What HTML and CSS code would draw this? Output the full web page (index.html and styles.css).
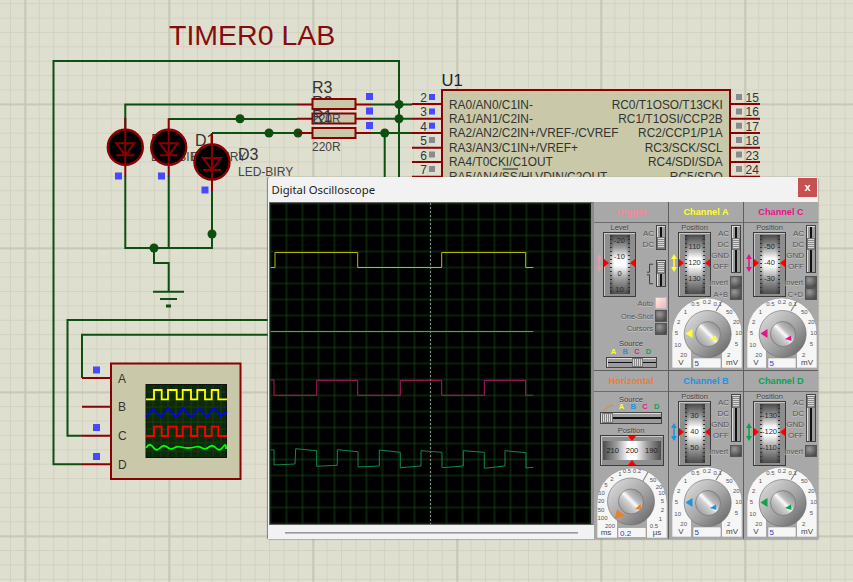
FILE: index.html
```html
<!DOCTYPE html>
<html lang="en">
<head>
  <meta charset="UTF-8" />
  <title>TIMER0 LAB - Digital Oscilloscope</title>
  <link rel="stylesheet" href="styles.css">
</head>
<body>
<div class="desk">

  <!-- schematic -->
  <svg class="schematic" width="853" height="582" viewBox="0 0 853 582">
    <text class="title" x="169" y="45">TIMER0 LAB</text>

    <g class="wires">
      <path d="M268 61H53.5V464.3H82M399 177V61H268"/>
      <path d="M125.3 130V104.4H297M371 104.4H412"/>
      <path d="M168.7 119H297M371 118.7H412"/>
      <path d="M212 133H297M371 133H412"/>
      <path d="M399 104V177M384.7 133V177"/>
      <path d="M125.3 176V248H212V191M168.7 176V248M154 248V263H168.7V291.7"/>
      <path d="M153 291.7H184M160 299H177" />
      <path class="thick" d="M166 306H171"/>
      <path d="M268 320H67.5V435.7H82M268 334.7H82V378"/>
    </g>
    <g class="nodes">
      <circle cx="240" cy="118.7" r="4.5"/>
      <circle cx="269" cy="133" r="4.5"/>
      <circle cx="298" cy="133" r="4.5"/>
      <circle cx="399" cy="104.4" r="4.5"/>
      <circle cx="399" cy="118.7" r="4.5"/>
      <circle cx="384.7" cy="133" r="4.5"/>
      <circle cx="212" cy="234" r="4.5"/>
      <circle cx="154" cy="248" r="4.5"/>
    </g>

    <!-- LEDs -->
    <text class="lbl" x="151" y="145.6">D2</text>
    <text class="lbl-sm" x="151" y="161">LED-BIRY</text>
    <text class="lbl" x="195" y="145.6">D1</text>
    <text class="lbl-sm" x="191" y="161">LED-BIRY</text>
    <text class="lbl" x="238" y="160">D3</text>
    <text class="lbl-sm" x="238" y="175.6">LED-BIRY</text>
    <g class="led" transform="translate(125.3 147.3)">
      <circle r="17.5"/><path class="lead" d="M0 -29.5V29"/><path d="M-9 -4H9L0 8ZM-9 8H9"/>
    </g>
    <g class="led" transform="translate(168.7 147.3)">
      <circle r="17.5"/><path class="lead" d="M0 -29V29"/><path d="M-9 -4H9L0 8ZM-9 8H9"/>
    </g>
    <g class="led" transform="translate(212 162)">
      <circle r="17.5"/><path class="lead" d="M0 -29V29"/><path d="M-9 -4H9L0 8ZM-9 8H9"/>
    </g>
    <rect class="probe" x="115" y="172.5" width="7" height="7"/>
    <rect class="probe" x="158" y="172.5" width="7" height="7"/>
    <rect class="probe" x="201.5" y="186.5" width="7" height="7"/>

    <!-- resistors -->
    <g class="red">
      <path d="M297 104.4H371M297 118.7H371M297 133H371"/>
    </g>
    <text class="lbl" x="312" y="93">R3</text>
    <text class="lbl" x="312" y="107.5">R2</text>
    <g class="part">
      <rect x="312.5" y="99" width="43" height="10"/>
      <rect x="312.5" y="113.5" width="43" height="10"/>
      <rect x="312.5" y="128" width="43" height="10"/>
    </g>
    <text class="lbl-sm" x="312" y="122.7">220R</text>
    <text class="lbl" x="312" y="122">R1</text>
    <text class="lbl-sm" x="312" y="151">220R</text>
    <rect class="probe" x="366" y="93" width="7" height="7"/>
    <rect class="probe" x="366" y="107.5" width="7" height="7"/>
    <rect class="probe" x="366" y="122" width="7" height="7"/>

    <!-- U1 -->
    <text class="lbl-lg" x="441.5" y="86">U1</text>
    <g class="red">
      <path d="M412 104H442M412 118.7H442M412 133H442M412 147.7H442M412 162H442M412 176.7H442"/>
      <path d="M730 104H760M730 118.7H760M730 133H760M730 147.7H760M730 162H760M730 176.7H760"/>
    </g>
    <rect class="part" x="442" y="90" width="288" height="120"/>
    <g class="pin-no">
      <text x="427" y="101.7">2</text><text x="427" y="116">3</text><text x="427" y="130.5">4</text>
      <text x="427" y="145">5</text><text x="427" y="159.5">6</text><text x="427" y="174">7</text>
    </g>
    <g class="pin-no-r">
      <text x="745.5" y="101.7">15</text><text x="745.5" y="116">16</text><text x="745.5" y="130.5">17</text>
      <text x="745.5" y="145">18</text><text x="745.5" y="159.5">23</text><text x="745.5" y="174">24</text>
    </g>
    <rect class="probe" x="429" y="94" width="6" height="6"/>
    <rect class="probe" x="429" y="108.5" width="6" height="6"/>
    <rect class="probe" x="429" y="122.7" width="6" height="6"/>
    <g class="idle">
      <rect x="429" y="137" width="6" height="6"/><rect x="429" y="151.5" width="6" height="6"/><rect x="429" y="166" width="6" height="6"/>
      <rect x="736" y="94" width="6" height="6"/><rect x="736" y="108.5" width="6" height="6"/><rect x="736" y="122.7" width="6" height="6"/>
      <rect x="736" y="137" width="6" height="6"/><rect x="736" y="151.5" width="6" height="6"/><rect x="736" y="166" width="6" height="6"/>
    </g>
    <g class="chip-l">
      <text x="449" y="108.5">RA0/AN0/C1IN-</text>
      <text x="449" y="123">RA1/AN1/C2IN-</text>
      <text x="449" y="137.4">RA2/AN2/C2IN+/VREF-/CVREF</text>
      <text x="449" y="152">RA3/AN3/C1IN+/VREF+</text>
      <text x="449" y="166.2">RA4/T0CKI/C1OUT</text>
      <text x="449" y="180.6">RA5/AN4/SS/HLVDIN/C2OUT</text>
    </g>
    <path class="bar" d="M502.7 169H518"/>
    <g class="chip-r">
      <text x="722.7" y="108.5">RC0/T1OSO/T13CKI</text>
      <text x="722.7" y="123">RC1/T1OSI/CCP2B</text>
      <text x="722.7" y="137.4">RC2/CCP1/P1A</text>
      <text x="722.7" y="152">RC3/SCK/SCL</text>
      <text x="722.7" y="166.2">RC4/SDI/SDA</text>
      <text x="722.7" y="180.6">RC5/SDO</text>
    </g>

    <!-- scope symbol -->
    <g class="red">
      <path d="M82 378H111M82 406.7H111M82 435.7H111M82 464.3H111"/>
    </g>
    <rect class="part" x="111" y="363.5" width="129.5" height="115.5"/>
    <text class="pin-tag" x="118" y="382.5">A</text>
    <text class="pin-tag" x="118" y="411">B</text>
    <text class="pin-tag" x="118" y="440">C</text>
    <text class="pin-tag" x="118" y="468.5">D</text>
    <rect class="probe" x="93" y="366.5" width="7" height="7"/>
    <rect class="probe" x="93" y="424" width="7" height="7"/>
    <rect class="probe" x="93" y="453" width="7" height="7"/>
    <rect class="mini" x="146" y="384.5" width="80.5" height="73"/>
    <path class="mini-grid" d="M153 385V457M161 385V457M168 385V457M176 385V457M183 385V457M191 385V457M198 385V457M206 385V457M213 385V457M221 385V457M146 392H226M146 400H226M146 407H226M146 414H226M146 422H226M146 429H226M146 436H226M146 443H226M146 451H226"/>
    <path class="t-y" d="M146 399.3H154V390H161.7V399.3H168V390H176.7V399.3H182.7V390H191V399.3H197.3V390H205V399.3H211.7V390H218.3V399.3H227"/>
    <path class="t-b" d="M146 416.5L153 409L161 417L168 408L176 417L183 408L191 417L199 408L207 417L214 408L221 416L227 411"/>
    <path class="t-r" d="M146 436H154V426.7H161.7V436H168V426.7H176.7V436H182.7V426.7H191V436H197.3V426.7H205V436H211.7V426.7H218.3V436H227"/>
    <path class="t-g" d="M146 448q3.5 -6 7 -1t7 1t7 -1t7 1t7 -1t7 1t7 -1t7 1t7 -1t7 1t7 -1t3 2"/>

    <!-- shared paint for the dials -->
    <defs>
      <linearGradient id="knob-out" x1="0" y1="0" x2="1" y2="1">
        <stop offset="0" stop-color="#e4e4e4"/><stop offset=".55" stop-color="#a2a2a2"/><stop offset="1" stop-color="#5c5c5c"/>
      </linearGradient>
      <linearGradient id="knob-in" x1="0" y1="1" x2="1" y2="0">
        <stop offset="0" stop-color="#8a8a8a"/><stop offset=".42" stop-color="#cfcfcf"/><stop offset=".52" stop-color="#fbfbfb"/><stop offset=".62" stop-color="#bcbcbc"/><stop offset="1" stop-color="#7a7a7a"/>
      </linearGradient>
      <symbol id="dial-volts" viewBox="0 0 70 70">
        <path class="scale" d="M0 70V35A35 35 0 0 1 70 35V70Z"/>
        <rect class="well" x="19" y="50" width="31" height="20"/>
        <path class="slash" d="M44 13L50 3"/>
        <g class="ticks">
          <text x="11.7" y="56.7">20</text><text x="5.7" y="46.7">10</text><text x="4.3" y="35">5</text>
          <text x="6.7" y="24">2</text><text x="13.3" y="14">1</text><text x="23.3" y="6">0.5</text>
          <text x="35" y="3.8">0.2</text><text x="45.7" y="6">0.1</text><text x="57.3" y="14">50</text>
          <text x="64.3" y="24">20</text><text x="66.7" y="35">10</text><text x="64.3" y="45.7">5</text><text x="56.7" y="56.7">2</text>
        </g>
        <circle cx="35.7" cy="36" r="23.5" fill="url(#knob-out)" class="knob"/>
        <circle cx="36" cy="36" r="12.5" fill="url(#knob-in)" class="knob"/>
        <path fill="currentColor" d="M13.5 35.5L20.5 31V40Z"/>
        <path fill="currentColor" d="M38 41L44 37.5L44.5 43Z"/>
        <rect class="entry" x="21" y="60" width="28" height="10"/>
        <text class="entry-val" x="22.5" y="68">5</text>
        <text class="unit" x="9" y="67">V</text>
        <text class="unit" x="60" y="67">mV</text>
      </symbol>
      <symbol id="dial-time" viewBox="0 0 70 70">
        <path class="scale" d="M0 70V35A35 35 0 0 1 70 35V70Z"/>
        <rect class="well" x="20" y="50" width="30" height="20"/>
        <path class="slash" d="M46 13L51 4"/>
        <g class="ticks">
          <text x="13" y="57.5">200</text><text x="5.5" y="50">100</text><text x="4" y="42">50</text>
          <text x="4" y="33">20</text><text x="4.5" y="25">10</text><text x="9" y="17">5</text>
          <text x="15" y="11">2</text><text x="23" y="5.5">1</text><text x="30" y="3">0.5</text>
          <text x="40" y="3">0.2</text><text x="56" y="12">50</text><text x="62" y="19">20</text>
          <text x="64.5" y="25">10</text><text x="65.5" y="33">5</text><text x="65.5" y="42">2</text>
          <text x="63.5" y="51">1</text><text x="57" y="57.5">0.5</text>
        </g>
        <circle cx="34" cy="33.5" r="23.5" fill="url(#knob-out)" class="knob"/>
        <circle cx="34" cy="33.5" r="12.5" fill="url(#knob-in)" class="knob"/>
        <path fill="currentColor" d="M17.5 51L20 41.5L28 47.5Z"/>
        <path fill="currentColor" d="M38 41L43.5 36L44.5 42Z"/>
        <rect class="entry" x="21" y="59.5" width="28" height="10"/>
        <text class="entry-val" x="23" y="67.5">0.2</text>
        <text class="unit" x="9" y="67">ms</text>
        <text class="unit" x="60" y="67">µs</text>
      </symbol>
    </defs>
  </svg>

  <!-- oscilloscope window -->
  <div class="scope">
    <div class="scope-title">
      <span>Digital Oscilloscope</span>
      <button class="close-btn">x</button>
    </div>
    <div class="scope-main">
      <div class="scope-left">
        <div class="screen">
          <svg width="321" height="321" viewBox="270 203 321 321">
            <defs>
              <pattern id="div" x="278.5" y="211.5" width="16" height="16" patternUnits="userSpaceOnUse">
                <path d="M8 0V16M0 8H16" stroke="#143f19" stroke-width="1" fill="none"/>
              </pattern>
            </defs>
            <rect x="270" y="203" width="321" height="321" fill="#000"/>
            <rect x="270" y="203" width="321" height="321" fill="url(#div)"/>
            <path class="centre" d="M430.5 203V524"/>
            <path class="tr-a" d="M270.7 267.5H275V252.5H357.7V267.5H441.7V252.5H525.7V267.5H533.3"/>
            <path class="tr-b" d="M270.7 331.5H533.3"/>
            <path class="tr-c" d="M270.7 380H274V395.3H316.7V380.3H357.7V395.3H400.3V380.3H441.7V395.3H484.3V380.3H525.7V395.3H533.3"/>
            <path class="tr-d" d="M270.7 449.7L274 450V465L295 464L295.7 448.7L316.7 450.7V466.3L337.3 465.3V449.7L358 451.7V467L379.3 466V450L400.3 452.3V467.7L421 466V450.7L442 452.3V467.7L463.3 466V450.7L484.3 452.3V468.3L505 466V450.7L526 452.7V468L533.3 467.3"/>
          </svg>
        </div>
        <div class="hbar"><i></i></div>
      </div>

      <div class="panels">
        <!-- Trigger -->
        <section class="panel">
          <h3 class="panel-head c-trig">Trigger</h3>
          <div class="panel-top">
            <div class="shift c-trig-a"><svg viewBox="0 0 8 18" preserveAspectRatio="none"><path d="M4 0L8 5H5V13H8L4 18L0 13H3V5H0Z"/></svg></div>
            <div class="drum-col">
              <div class="cap">Level</div>
              <div class="drum-frame">
                <div class="drum four"><span>-20</span><span>-10</span><span>0</span><span>10</span></div>
                <b class="mark mark-l"></b><b class="mark mark-r"></b>
              </div>
            </div>
            <div class="side">
              <div class="side-row">
                <div class="modes"><span>AC</span><span>DC</span></div>
                <div class="vslider short"><i class="thumb low"></i></div>
              </div>
              <div class="side-row edge-row">
                <svg class="edge" width="8" height="24" viewBox="0 0 9 24"><path d="M1 10H4V1H8M1 13H4V23H8"/></svg>
                <div class="vslider tall"><i class="thumb"></i></div>
              </div>
            </div>
          </div>
          <div class="btn-rows">
            <div class="btn-row"><span>Auto</span><i class="btn on"></i></div>
            <div class="btn-row"><span>One-Shot</span><i class="btn"></i></div>
            <div class="btn-row"><span>Cursors</span><i class="btn"></i></div>
          </div>
          <div class="source">
            <div class="cap">Source</div>
            <div class="letters"><span class="l-a">A</span><span class="l-b">B</span><span class="l-c">C</span><span class="l-d">D</span></div>
            <div class="hslider"><i class="thumb-h mid"></i></div>
          </div>
        </section>

        <!-- Channel A -->
        <section class="panel">
          <h3 class="panel-head c-a">Channel A</h3>
          <div class="panel-top">
            <div class="shift c-a"><svg viewBox="0 0 8 18" preserveAspectRatio="none"><path d="M4 0L8 5H5V13H8L4 18L0 13H3V5H0Z"/></svg></div>
            <div class="drum-col">
              <div class="cap">Position</div>
              <div class="drum-frame">
                <div class="drum"><span>110</span><span>120</span><span>130</span></div>
                <b class="mark mark-l"></b><b class="mark mark-r"></b>
              </div>
            </div>
            <div class="side">
              <div class="side-row">
                <div class="modes"><span>AC</span><span>DC</span><span>GND</span><span>OFF</span></div>
                <div class="vslider"><i class="thumb dc"></i></div>
              </div>
              <div class="btn-row"><span>Invert</span><i class="btn"></i></div>
              <div class="btn-row"><span>A+B</span><i class="btn"></i></div>
            </div>
          </div>
          <svg class="dial c-a"><use href="#dial-volts"/></svg>
        </section>

        <!-- Channel C -->
        <section class="panel">
          <h3 class="panel-head c-c">Channel C</h3>
          <div class="panel-top">
            <div class="shift c-c"><svg viewBox="0 0 8 18" preserveAspectRatio="none"><path d="M4 0L8 5H5V13H8L4 18L0 13H3V5H0Z"/></svg></div>
            <div class="drum-col">
              <div class="cap">Position</div>
              <div class="drum-frame">
                <div class="drum"><span>-50</span><span>-40</span><span>-30</span></div>
                <b class="mark mark-l"></b><b class="mark mark-r"></b>
              </div>
            </div>
            <div class="side">
              <div class="side-row">
                <div class="modes"><span>AC</span><span>DC</span><span>GND</span><span>OFF</span></div>
                <div class="vslider"><i class="thumb dc"></i></div>
              </div>
              <div class="btn-row"><span>Invert</span><i class="btn"></i></div>
              <div class="btn-row"><span>C+D</span><i class="btn"></i></div>
            </div>
          </div>
          <svg class="dial c-c"><use href="#dial-volts"/></svg>
        </section>

        <!-- Horizontal -->
        <section class="panel">
          <h3 class="panel-head c-h">Horizontal</h3>
          <div class="source h-source">
            <div class="cap">Source</div>
            <div class="letters">
              <svg class="ramp" width="10" height="7" viewBox="0 0 10 7"><path d="M0 7L8 1H10"/></svg>
              <span class="l-a">A</span><span class="l-b">B</span><span class="l-c">C</span><span class="l-d">D</span>
            </div>
            <div class="hslider wide"><i class="thumb-h"></i></div>
          </div>
          <div class="cap">Position</div>
          <div class="drum-frame flat">
            <div class="drum-h"><span>210</span><span>200</span><span>190</span></div>
            <b class="mark mark-t"></b><b class="mark mark-b"></b>
          </div>
          <svg class="dial c-h time"><use href="#dial-time"/></svg>
        </section>

        <!-- Channel B -->
        <section class="panel">
          <h3 class="panel-head c-b">Channel B</h3>
          <div class="panel-top">
            <div class="shift c-b"><svg viewBox="0 0 8 18" preserveAspectRatio="none"><path d="M4 0L8 5H5V13H8L4 18L0 13H3V5H0Z"/></svg></div>
            <div class="drum-col">
              <div class="cap">Position</div>
              <div class="drum-frame">
                <div class="drum"><span>30</span><span>40</span><span>50</span></div>
                <b class="mark mark-l"></b><b class="mark mark-r"></b>
              </div>
            </div>
            <div class="side">
              <div class="side-row">
                <div class="modes"><span>AC</span><span>DC</span><span>GND</span><span>OFF</span></div>
                <div class="vslider"><i class="thumb"></i></div>
              </div>
              <div class="btn-row"><span>Invert</span><i class="btn"></i></div>
            </div>
          </div>
          <svg class="dial c-b"><use href="#dial-volts"/></svg>
        </section>

        <!-- Channel D -->
        <section class="panel">
          <h3 class="panel-head c-d">Channel D</h3>
          <div class="panel-top">
            <div class="shift c-d"><svg viewBox="0 0 8 18" preserveAspectRatio="none"><path d="M4 0L8 5H5V13H8L4 18L0 13H3V5H0Z"/></svg></div>
            <div class="drum-col">
              <div class="cap">Position</div>
              <div class="drum-frame">
                <div class="drum"><span>-130</span><span>-120</span><span>-110</span></div>
                <b class="mark mark-l"></b><b class="mark mark-r"></b>
              </div>
            </div>
            <div class="side">
              <div class="side-row">
                <div class="modes"><span>AC</span><span>DC</span><span>GND</span><span>OFF</span></div>
                <div class="vslider"><i class="thumb"></i></div>
              </div>
              <div class="btn-row"><span>Invert</span><i class="btn"></i></div>
            </div>
          </div>
          <svg class="dial c-d"><use href="#dial-volts"/></svg>
        </section>
      </div>
    </div>
  </div>
</div>
</body>
</html>
```

FILE: styles.css
```css
*{margin:0;padding:0;box-sizing:border-box}
html,body{width:853px;height:582px;overflow:hidden}
body{font-family:"Liberation Sans",Arial,sans-serif;color:#333}

/* sheet grid: 14.4px minor, 144px major */
.desk{position:relative;width:853px;height:582px;background-color:#dfdfd0;
  background-image:
    linear-gradient(90deg,#c8c8b8 1.6px,transparent 1.6px),
    linear-gradient(#c8c8b8 1.6px,transparent 1.6px),
    linear-gradient(90deg,#d2d2c3 1.4px,transparent 1.4px),
    linear-gradient(#d2d2c3 1.4px,transparent 1.4px);
  background-size:144px 144px,144px 144px,14.4px 14.4px,14.4px 14.4px;
  background-position:24.4px 0,0 103.4px,10px 0,0 3.2px}
.schematic{display:block}
.schematic text{font-family:"Liberation Sans",Arial,sans-serif}

.title{font-size:28.5px;fill:#860d0d}
.wires path{fill:none;stroke:#0c4f10;stroke-width:2}
.wires .thick{stroke-width:3}
.nodes circle{fill:#0c4f10}
.red path{fill:none;stroke:#8b0000;stroke-width:2}
.part rect,rect.part{fill:#c9c9a9;stroke:#8b0000;stroke-width:2}
.lbl{font-size:16px;fill:#333}
.lbl-lg{font-size:16.5px;fill:#222}
.lbl-sm{font-size:12px;fill:#444}
.led circle{fill:#000;stroke:#8b0000;stroke-width:2.4}
.led path{fill:none;stroke:#8b0000;stroke-width:2}
.probe{fill:#4848ff}
.idle rect{fill:#8a8a8a}
.pin-no text{font-size:12px;fill:#333;text-anchor:end}
.pin-no-r text{font-size:12px;fill:#333}
.chip-l text,.chip-r text{font-size:11.9px;fill:#333}
.chip-r text{text-anchor:end}
.bar{stroke:#222;stroke-width:1}
.pin-tag{font-size:12px;fill:#333}
.mini{fill:#0a2a0a;stroke:#111;stroke-width:1}
.mini-grid{stroke:#1d3d12;stroke-width:1;fill:none}
.t-y,.t-b,.t-r,.t-g{fill:none;stroke-width:1.8}
.t-y{stroke:#ffff00}
.t-b{stroke:#0000ff}
.t-r{stroke:#ff0000}
.t-g{stroke:#00ff00}

/* window */
.scope{position:absolute;left:268px;top:177px;width:550px;height:362px;background:#f2f2f2;
  border-radius:2px 2px 0 0;box-shadow:-1px 0 1px rgba(90,90,90,.7),1px 1px 1px rgba(120,120,120,.4);
  display:flex;flex-direction:column}
.scope-title{height:24px;display:flex;align-items:center;justify-content:space-between;padding:0 1px 0 3.5px;
  font:11.3px "Noto Sans","Open Sans",sans-serif;color:#222;flex:none}
.close-btn{width:19px;height:19px;border:none;background:#c75050;color:#fff;font:bold 11px/17px "Liberation Sans",sans-serif;margin-top:-3px}
.scope-main{flex:1;display:flex;min-height:0}
.scope-left{width:326px;padding:1px 0 0 1px;display:flex;flex-direction:column;flex:none}
.screen{width:325px;height:323px;border:1px solid #666;border-right:3px solid #8a8a8a;background:#000;overflow:hidden;flex:none}
.screen svg{display:block}
.centre{stroke:#8c8c8c;stroke-dasharray:2 2;fill:none}
.tr-a,.tr-b,.tr-c,.tr-d{fill:none;stroke-width:1}
.tr-a{stroke:#b9b900}
.tr-b{stroke:#12b0c0}
.tr-c{stroke:#b01a62}
.tr-d{stroke:#0e8a4c}
.hbar{flex:1;display:flex;align-items:center;padding:1px 16px 0}
.hbar i{display:block;width:100%;height:1px;background:#999;box-shadow:0 1px 0 #bbb}

/* control panels */
.panels{width:224px;height:337px;margin-top:1px;background:#5e5e5e;display:grid;grid-template-columns:74px 74px 74px;grid-template-rows:168px 168px;column-gap:1px;row-gap:1px;flex:none}
.panel{background:#a8a8a8;display:flex;flex-direction:column;align-items:stretch;position:relative;overflow:hidden}
.panel-head{height:21px;border-bottom:1.5px solid #6c6c6c;font:bold 9.2px/20px "Liberation Sans",sans-serif;text-align:center;flex:none}
.c-trig{color:#f08b9c}
.c-a{color:#ffff2e}
.c-c{color:#e5158a}
.c-h{color:#e8802c}
.c-b{color:#1c94e0}
.c-d{color:#0ca24e}
.c-trig-a{color:#e89aa8}

.panel-top{height:75px;display:flex;flex:none}
.shift{width:9px;padding:31px 0 0 1.5px;flex:none}
.shift svg{display:block;width:6px;height:18px;fill:currentColor}
.drum-col{width:33px;flex:none}
.cap{font-size:7.5px;line-height:9px;color:#444;text-align:center;text-shadow:0 1px 0 #c4c4c4}
.drum-frame{position:relative;height:65px;border:1px solid #3c3c3c;background:#8e8e8e;box-shadow:inset 1px 1px 0 #c8c8c8;padding:2px 5.5px}
.drum{height:59px;padding-bottom:3px;overflow:hidden;display:flex;flex-direction:column;align-items:center;justify-content:center;font-size:7.5px;line-height:16.3px;color:#2c2c2c;
  background:
    repeating-linear-gradient(180deg,#333 0 1px,transparent 1px 4px) left/2px 100% no-repeat,
    repeating-linear-gradient(180deg,#333 0 1px,transparent 1px 4px) right/2px 100% no-repeat,
    linear-gradient(90deg,rgba(0,0,0,.3),transparent 22%,transparent 78%,rgba(0,0,0,.3)),
    linear-gradient(180deg,#4c4c4c,#a0a0a0 22%,#fff 40%,#fff 52%,#a0a0a0 74%,#4c4c4c)}
.drum.four{justify-content:flex-start;padding:0}
.drum.four span:first-child{margin-top:-2px}
.drum-col .drum span{white-space:nowrap}
.mark{position:absolute;width:0;height:0;border:4px solid transparent}
.mark-l{left:0;top:26px;border-left:5px solid #f00;border-right:0}
.mark-r{right:0;top:26px;border-right:5px solid #f00;border-left:0}
.mark-t{left:27px;top:0;border-top:5px solid #f00;border-bottom:0}
.mark-b{left:27px;bottom:0;border-bottom:5px solid #f00;border-top:0}

/* the Invert label runs up against the drum frame, so it paints above it */
.side{position:relative;z-index:1;flex:1;display:flex;flex-direction:column;align-items:flex-end;padding:2px 1px 0 0;min-width:0}
.side-row{display:flex;justify-content:flex-end;gap:2px}
.modes{display:flex;flex-direction:column;align-items:flex-end;padding-top:2.5px;font-size:8px;line-height:11.2px;color:#555;text-shadow:0 1px 0 #c8c8c8}
.vslider{width:10px;height:48px;border:1px solid #444;box-shadow:inset 1px 1px 0 #ddd;background:linear-gradient(90deg,transparent 40%,#111 40%,#111 60%,transparent 60%)#9c9c9c;margin-right:1px}
.vslider.short{height:25px}
.vslider.tall{height:27px}
.edge-row{margin-top:10px;align-items:center}
.edge{fill:none;stroke:#333;stroke-width:1}
.thumb{display:block;height:12px;margin:1px 0 0;background:repeating-linear-gradient(180deg,#d8d8d8 0 1px,#8a8a8a 1px 2px);border:1px solid #777}
.thumb.dc{margin-top:12px}
.thumb.low{margin-top:11px}

.btn-row{display:flex;justify-content:flex-end;align-items:center;gap:2px;height:12.7px;font-size:7.5px;color:#555;white-space:nowrap;text-shadow:0 1px 0 #c8c8c8}
.side-row + .btn-row{margin-top:3px}
.btn{display:block;width:12px;height:12px;border:1px solid #555;background:radial-gradient(circle at 35% 30%,#999,#4c4c4c 80%)}
.btn.on{background:linear-gradient(135deg,#ffe9e9,#f4b3b3);border-color:#bbb}
.btn-rows{padding:0 1px 0 0;margin-top:-1px;flex:none}
.source{margin-top:4px;flex:none}
.letters{display:flex;justify-content:center;align-items:center;gap:6.3px;font:bold 7.5px/8px "Liberation Sans",sans-serif}
.l-a{color:#ffff2e}
.l-b{color:#1c94e0}
.l-c{color:#e5158a}
.l-d{color:#0ca24e}
.hslider{width:51px;height:11px;margin:1px 0 0 12px;border:1px solid #444;box-shadow:inset 1px 1px 0 #ddd;background:linear-gradient(transparent 40%,#111 40%,#111 60%,transparent 60%)#9c9c9c;display:flex}
.hslider.wide{width:62px;margin:1px 0 0 6px;height:12px}
.thumb-h{display:block;width:11px;margin-left:1px;background:repeating-linear-gradient(90deg,#d8d8d8 0 1px,#8a8a8a 1px 2px);border:1px solid #777}
.thumb-h.mid{margin-left:25px}

/* horizontal panel */
.h-source{margin-top:3px}
.h-source + .cap{margin-top:2px}
.h-source .letters{margin-top:-1px}
.ramp{fill:none;stroke:#e8802c;stroke-width:1}
.drum-frame.flat{width:64px;height:31px;margin:0 0 0 6px;padding:5px 2px;flex:none}
.drum-h{height:19px;display:flex;align-items:center;justify-content:space-around;font-size:7.5px;color:#222;
  background:linear-gradient(90deg,#4c4c4c,#a0a0a0 24%,#fff 44%,#fff 56%,#a0a0a0 76%,#4c4c4c)}

/* dials */
.dial{display:block;width:70px;height:70px;flex:none;margin:0 0 0 3px;overflow:visible}
.dial.time{margin:2px 0 0 3px}
.scale{fill:#f6f6f6;stroke:#8c8c8c;stroke-width:.5}
.well{fill:#a8a8a8}
.slash{stroke:#8a8a8a;stroke-width:1.2;fill:none}
.ticks text{font:6px "Liberation Sans",sans-serif;fill:#555;text-anchor:middle;dominant-baseline:central}
.knob{stroke:#6a6a6a;stroke-width:.6}
.entry{fill:#f6f6f6;stroke:#888;stroke-width:.5}
.entry-val{font:8px "Liberation Sans",sans-serif;fill:#3535c8}
.unit{font:8px "Liberation Sans",sans-serif;fill:#444;text-anchor:middle}
```
